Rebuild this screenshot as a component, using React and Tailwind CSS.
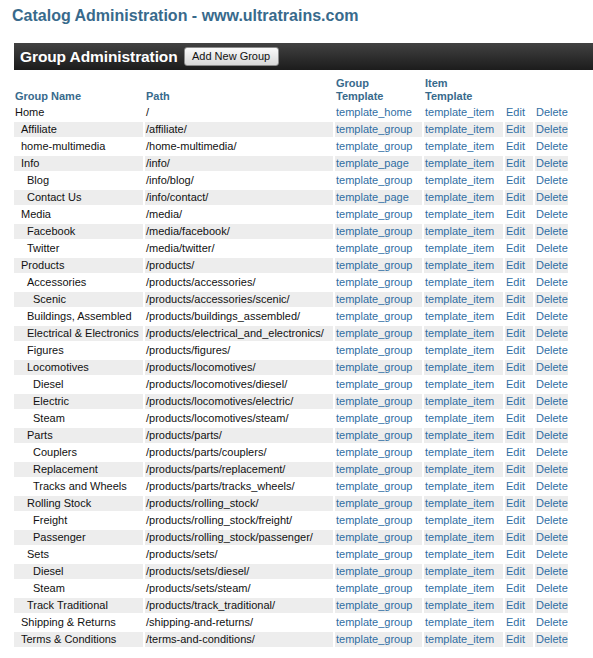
import React from "react";

const rows = [
  ["Home", 0, "/", "template_home"],
  ["Affiliate", 1, "/affiliate/", "template_group"],
  ["home-multimedia", 1, "/home-multimedia/", "template_group"],
  ["Info", 1, "/info/", "template_page"],
  ["Blog", 2, "/info/blog/", "template_group"],
  ["Contact Us", 2, "/info/contact/", "template_page"],
  ["Media", 1, "/media/", "template_group"],
  ["Facebook", 2, "/media/facebook/", "template_group"],
  ["Twitter", 2, "/media/twitter/", "template_group"],
  ["Products", 1, "/products/", "template_group"],
  ["Accessories", 2, "/products/accessories/", "template_group"],
  ["Scenic", 3, "/products/accessories/scenic/", "template_group"],
  ["Buildings, Assembled", 2, "/products/buildings_assembled/", "template_group"],
  ["Electrical & Electronics", 2, "/products/electrical_and_electronics/", "template_group"],
  ["Figures", 2, "/products/figures/", "template_group"],
  ["Locomotives", 2, "/products/locomotives/", "template_group"],
  ["Diesel", 3, "/products/locomotives/diesel/", "template_group"],
  ["Electric", 3, "/products/locomotives/electric/", "template_group"],
  ["Steam", 3, "/products/locomotives/steam/", "template_group"],
  ["Parts", 2, "/products/parts/", "template_group"],
  ["Couplers", 3, "/products/parts/couplers/", "template_group"],
  ["Replacement", 3, "/products/parts/replacement/", "template_group"],
  ["Tracks and Wheels", 3, "/products/parts/tracks_wheels/", "template_group"],
  ["Rolling Stock", 2, "/products/rolling_stock/", "template_group"],
  ["Freight", 3, "/products/rolling_stock/freight/", "template_group"],
  ["Passenger", 3, "/products/rolling_stock/passenger/", "template_group"],
  ["Sets", 2, "/products/sets/", "template_group"],
  ["Diesel", 3, "/products/sets/diesel/", "template_group"],
  ["Steam", 3, "/products/sets/steam/", "template_group"],
  ["Track Traditional", 2, "/products/track_traditional/", "template_group"],
  ["Shipping & Returns", 1, "/shipping-and-returns/", "template_group"],
  ["Terms & Conditions", 1, "/terms-and-conditions/", "template_group"],
];

const pads = ["pl-[1px]", "pl-[7px]", "pl-[13px]", "pl-[19px]"];

export default function App() {
  return (
    <div className="w-[593px] h-[658px] bg-white overflow-hidden" style={{ fontFamily: '"Liberation Sans", Arial, sans-serif' }}>
      <h1 className="pt-[6px] pl-[12px] text-[16px] leading-[20px] font-bold text-[#386a8c]">
        Catalog Administration - www.ultratrains.com
      </h1>
      <div className="mt-[17px] ml-[14px] h-[27px] flex items-center bg-gradient-to-b from-[#424242] to-[#1c1c1c]">
        <span className="pl-[6px] text-white font-bold text-[15.5px] tracking-[-0.1px] leading-[20px]">Group Administration</span>
        <button className="ml-[6px] w-[95px] h-[19px] rounded-[3px] border border-[#8a8a8a] bg-gradient-to-b from-[#fafafa] to-[#d8d8d8] text-[11px] leading-[17px] text-[#111] text-center">
          Add New Group
        </button>
      </div>
      <table className="ml-[12px] mt-[5px] border-separate border-spacing-[2px] table-fixed text-[11px]">
        <colgroup>
          <col className="w-[129px]" />
          <col className="w-[188px]" />
          <col className="w-[87px]" />
          <col className="w-[79px]" />
          <col className="w-[28px]" />
          <col className="w-[33px]" />
        </colgroup>
        <thead>
          <tr className="text-[#386a8c] font-bold leading-[13px] text-left align-bottom">
            <th className="p-0 pl-[1px] font-bold">Group Name</th>
            <th className="p-0 pl-[1px] font-bold">Path</th>
            <th className="p-0 pl-[1px] font-bold">Group<br />Template</th>
            <th className="p-0 pl-[1px] font-bold">Item<br />Template</th>
            <th className="p-0"></th>
            <th className="p-0"></th>
          </tr>
        </thead>
        <tbody>
          {rows.map(([name, depth, path, tpl], i) => {
            const bg = i % 2 === 1 ? "bg-[#ededed]" : "";
            return (
              <tr key={i} className="h-[15px] leading-[15px]">
                <td className={`${bg} p-0 ${pads[depth]} text-[#111] whitespace-nowrap overflow-hidden`}>{name}</td>
                <td className={`${bg} p-0 pl-[1px] text-[#111] whitespace-nowrap overflow-hidden`}>{path}</td>
                <td className={`${bg} p-0 pl-[1px] text-[#2f6ea3] whitespace-nowrap`}>{tpl}</td>
                <td className={`${bg} p-0 pl-[1px] text-[#2f6ea3] whitespace-nowrap`}>template_item</td>
                <td className={`${bg} p-0 pl-[1px] text-[#2f6ea3]`}>Edit</td>
                <td className={`${bg} p-0 pl-[1px] text-[#2f6ea3]`}>Delete</td>
              </tr>
            );
          })}
        </tbody>
      </table>
    </div>
  );
}
